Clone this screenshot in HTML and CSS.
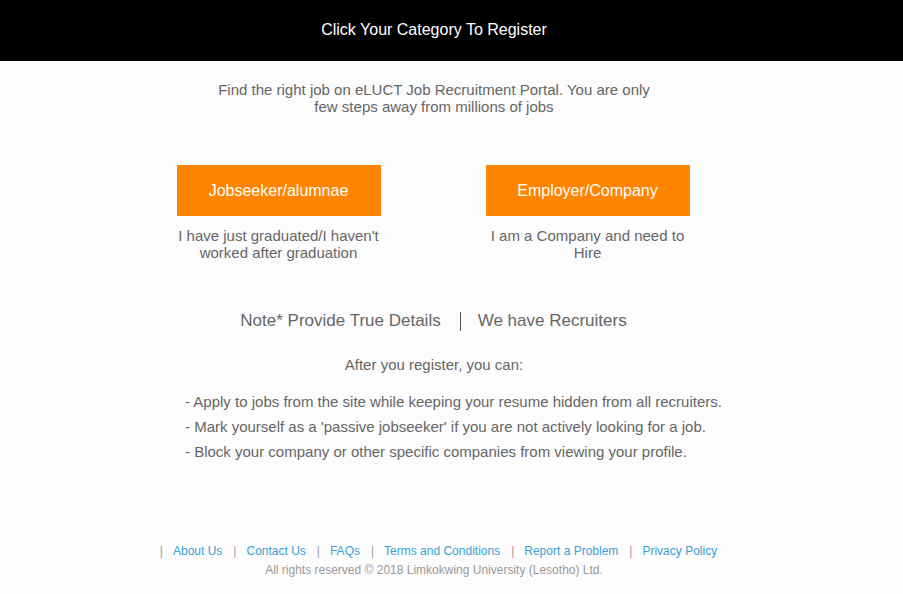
FILE: index.html
```html
<!DOCTYPE html>
<html>
<head>
<meta charset="utf-8">
<link rel="stylesheet" href="styles.css">
</head>
<body>
<header class="topbar">
  <div class="wrap"><h1 class="title">Click Your Category To Register</h1></div>
</header>
<main class="wrap">
  <p class="intro">Find the right job on eLUCT Job Recruitment Portal. You are only few steps away from millions of jobs</p>
  <div class="choices">
    <div class="choice">
      <a class="btn" href="#">Jobseeker/alumnae</a>
      <p class="desc">I have just graduated/I haven't worked after graduation</p>
    </div>
    <div class="choice">
      <a class="btn" href="#">Employer/Company</a>
      <p class="desc">I am a Company and need to Hire</p>
    </div>
  </div>
  <div class="note">
    <span>Note* Provide True Details</span>
    <span class="vsep"></span>
    <span>We have Recruiters</span>
  </div>
  <p class="after">After you register, you can:</p>
  <ul class="perks">
    <li>- Apply to jobs from the site while keeping your resume hidden from all recruiters.</li>
    <li>- Mark yourself as a 'passive jobseeker' if you are not actively looking for a job.</li>
    <li>- Block your company or other specific companies from viewing your profile.</li>
  </ul>
  <footer class="footer">
    <nav class="links">
      <span class="bar">|</span><a href="#">About Us</a>
      <span class="bar">|</span><a href="#">Contact Us</a>
      <span class="bar">|</span><a href="#">FAQs</a>
      <span class="bar">|</span><a href="#">Terms and Conditions</a>
      <span class="bar">|</span><a href="#">Report a Problem</a>
      <span class="bar">|</span><a href="#">Privacy Policy</a>
    </nav>
    <p class="copy">All rights reserved © 2018 Limkokwing University (Lesotho) Ltd.</p>
  </footer>
</main>
</body>
</html>
```
FILE: styles.css
```css
html, body {
  margin: 0;
  padding: 0;
  background: #fcfcfc;
  font-family: "Liberation Sans", Arial, sans-serif;
  color: #666;
}
.wrap {
  width: 868px;
}
.topbar {
  background: #000;
  height: 61px;
  display: flex;
  align-items: center;
}
.title {
  margin: 0;
  padding-bottom: 2px;
  text-align: center;
  color: #fff;
  font-weight: normal;
  font-size: 16px;
  line-height: 20px;
}
main {
  display: flex;
  flex-direction: column;
  align-items: center;
}
.intro {
  width: 450px;
  margin: 20px 0 0;
  text-align: center;
  font-size: 15px;
  line-height: 17px;
}
.choices {
  display: flex;
  gap: 105px;
  margin-top: 50px;
  margin-right: 2px;
}
.choice {
  width: 204px;
  display: flex;
  flex-direction: column;
  align-items: center;
}
.btn {
  display: flex;
  align-items: center;
  justify-content: center;
  width: 204px;
  height: 51px;
  background: #ff8400;
  color: #fff;
  font-size: 16px;
  text-decoration: none;
}
.desc {
  margin: 11px 0 0;
  text-align: center;
  font-size: 15px;
  line-height: 17px;
}
.note {
  display: flex;
  align-items: center;
  gap: 17px;
  margin-top: 50px;
  margin-right: 1px;
  font-size: 17px;
  line-height: 20px;
}
.vsep {
  width: 1px;
  height: 19px;
  background: #555;
  margin-left: 2px;
}
.after {
  margin: 25px 0 0;
  font-size: 15px;
  line-height: 17px;
}
.perks {
  align-self: flex-start;
  list-style: none;
  padding: 0;
  margin: 16px 0 0 185px;
  white-space: nowrap;
  font-size: 15px;
  line-height: 25px;
}
.footer {
  margin-top: 80px;
  display: flex;
  flex-direction: column;
  align-items: center;
  font-size: 12px;
}
.links {
  display: flex;
  align-items: center;
  margin-left: 9px;
}
.links .bar {
  color: #999;
  margin: 0 10px 0 11px;
}
.links .bar:first-child {
  margin-left: 0;
}
.links a {
  color: #3aa0d8;
  text-decoration: none;
}
.copy {
  margin: 5px 0 0;
  color: #999;
  font-size: 12px;
}
```
